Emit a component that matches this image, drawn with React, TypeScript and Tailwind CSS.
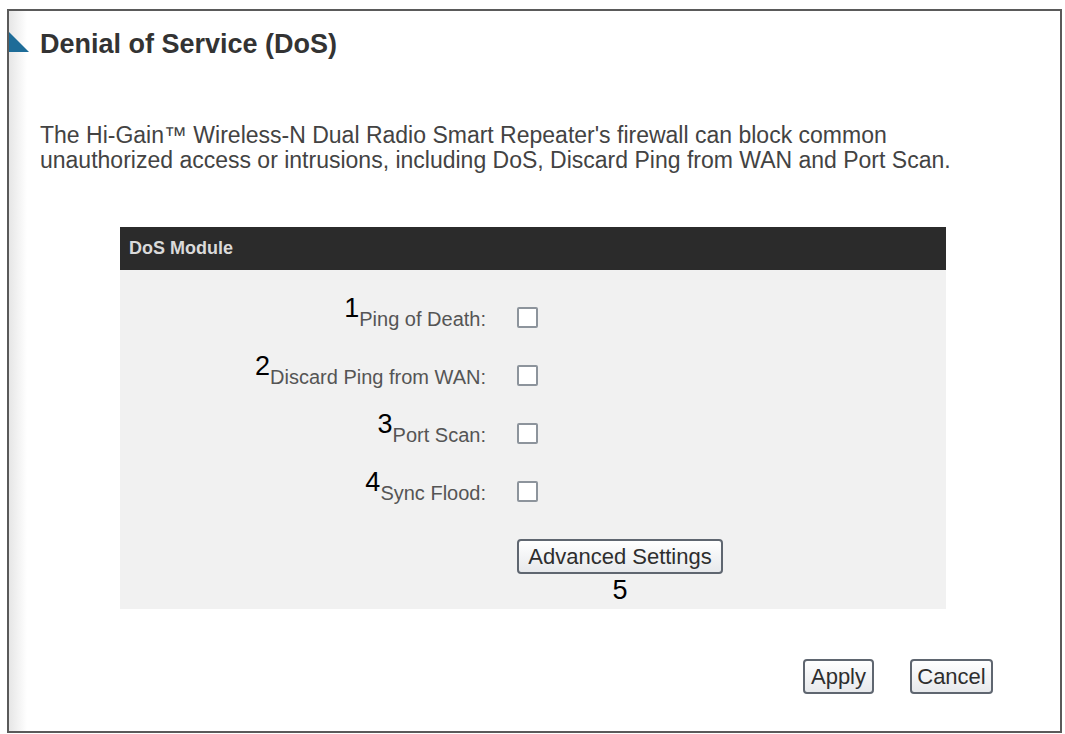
import React from 'react';

const rows = [
  { n: '1', label: 'Ping of Death:' },
  { n: '2', label: 'Discard Ping from WAN:' },
  { n: '3', label: 'Port Scan:' },
  { n: '4', label: 'Sync Flood:' },
];

const btn =
  'border-2 border-[#5f6670] rounded-[4px] bg-gradient-to-b from-white to-[#e7e9ec] text-[#2e2e2e] leading-none';

const App: React.FC = () => {
  return (
    <div className="w-[1065px] h-[734px] bg-white font-['Liberation_Sans',Arial,sans-serif] pt-[9px] pl-[7px]">
      <div className="relative w-[1055px] h-[724px] border-2 border-[#5a5a5a] bg-white">
        {/* faint left shading */}
        <div className="absolute left-0 top-0 bottom-0 w-[18px] bg-gradient-to-r from-[#e6e6e6] to-white"></div>

        <div className="relative">
          {/* Title */}
          <div className="flex items-center h-[46px] mt-[10px]">
            <svg width="20" height="20" viewBox="0 0 20 20" className="-mt-[4px]">
              <polygon points="0,0 20,20 0,20" fill="#1d6c98" />
            </svg>
            <h1 className="ml-[11px] text-[27px] font-bold text-[#333]">Denial of Service (DoS)</h1>
          </div>

          {/* Description */}
          <p className="ml-[31px] mt-[56px] text-[23px] leading-[25px] text-[#434343] whitespace-nowrap">
            The Hi-Gain™ Wireless-N Dual Radio Smart Repeater's firewall can block common
            <br />
            unauthorized access or intrusions, including DoS, Discard Ping from WAN and Port Scan.
          </p>

          {/* DoS Module panel */}
          <div className="ml-[111px] mt-[54px] w-[826px]">
            <div className="h-[43px] bg-[#2b2b2b] flex items-center pl-[9px]">
              <span className="text-[18px] font-bold text-[#dadada]">DoS Module</span>
            </div>
            <div className="bg-[#f1f1f1] pt-[18px] pb-[5px]">
              {rows.map((r) => (
                <div key={r.n} className="h-[58px] flex items-center">
                  <div className="w-[366px] flex justify-end items-baseline">
                    <span className="text-[27px] leading-none text-black -translate-y-[9px]">{r.n}</span>
                    <span className="text-[20px] text-[#555] leading-none">{r.label}</span>
                  </div>
                  <span className="ml-[31px] w-[21px] h-[21px] border-2 border-[#8d949c] rounded-[2px] bg-white"></span>
                </div>
              ))}
              <div className="ml-[397px] mt-[19px] w-[206px] flex flex-col items-center">
                <button className={`${btn} w-[206px] h-[35px] text-[22px]`}>Advanced Settings</button>
                <span className="text-[27px] leading-none text-black mt-[3px]">5</span>
              </div>
            </div>
          </div>

          {/* Apply / Cancel */}
          <div className="flex justify-end gap-[36px] mt-[50px] pr-[67px]">
            <button className={`${btn} w-[71px] h-[35px] text-[22px]`}>Apply</button>
            <button className={`${btn} w-[83px] h-[35px] text-[22px]`}>Cancel</button>
          </div>
        </div>
      </div>
    </div>
  );
};

export default App;
